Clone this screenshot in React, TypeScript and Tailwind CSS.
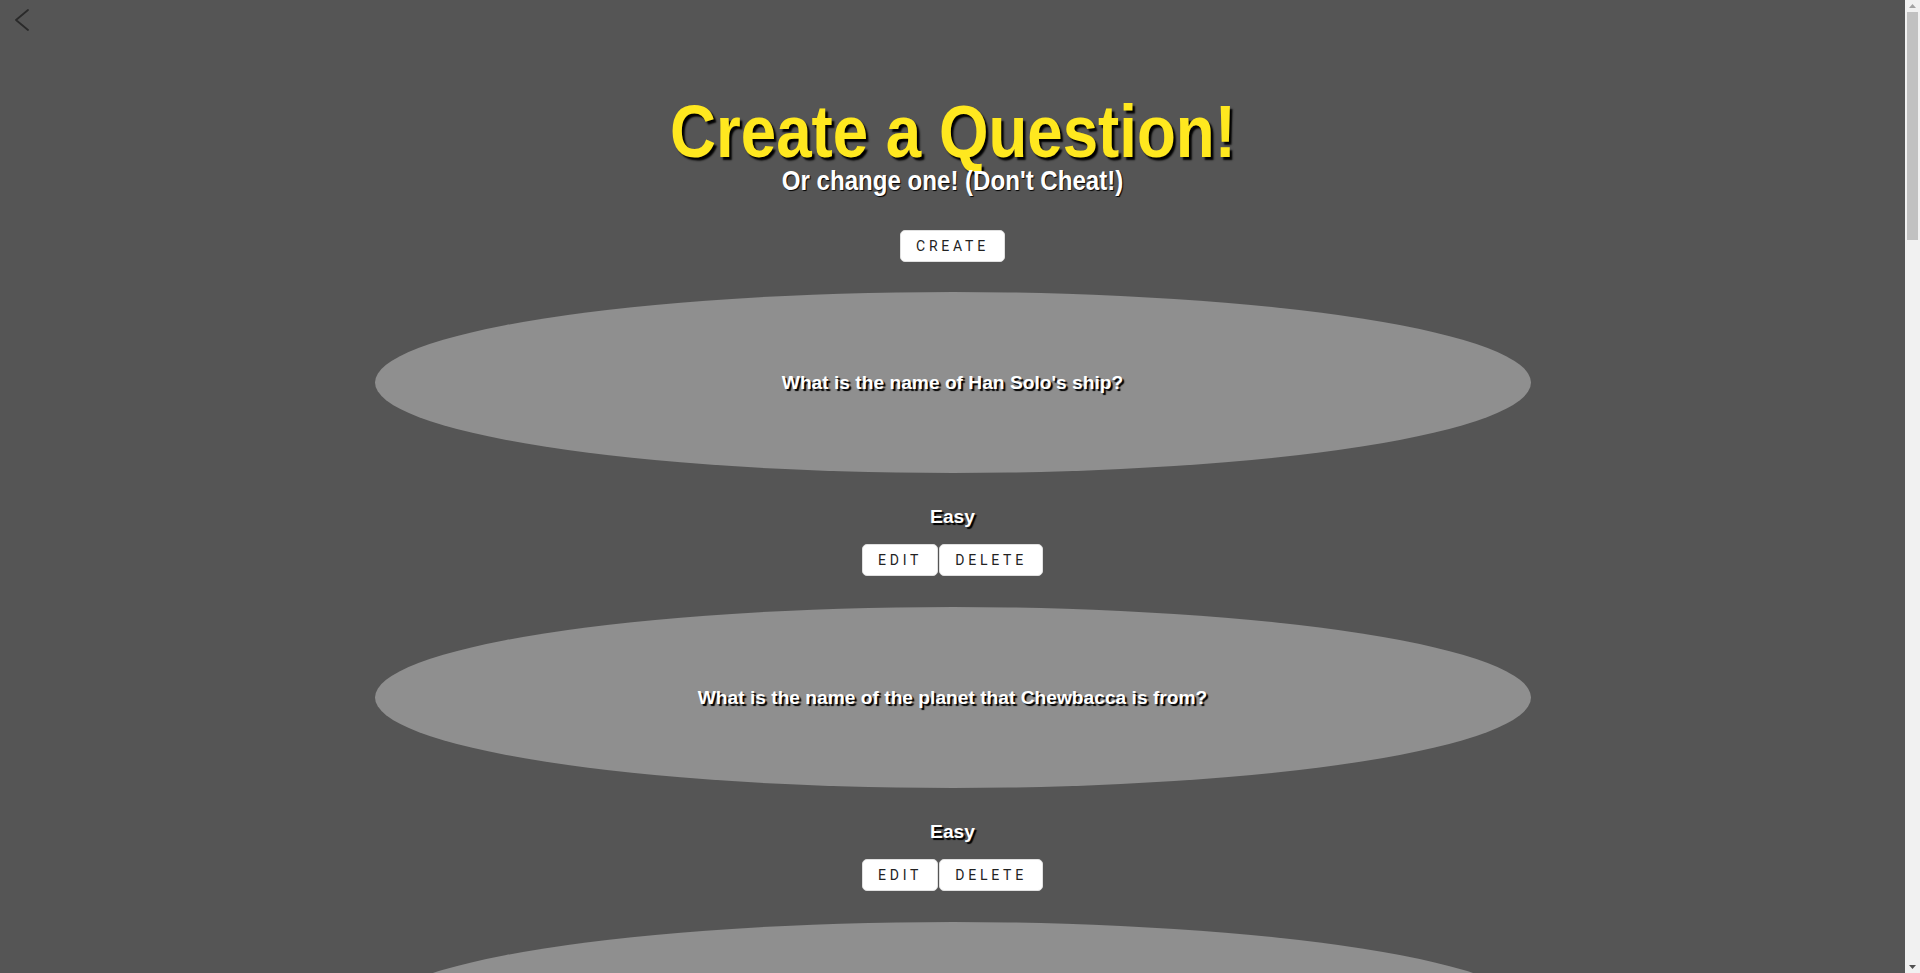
import React from "react";

type Question = { id: number; text: string; difficulty: string };

const questions: Question[] = [
  { id: 1, text: "What is the name of Han Solo's ship?", difficulty: "Easy" },
  { id: 2, text: "What is the name of the planet that Chewbacca is from?", difficulty: "Easy" },
  { id: 3, text: "Who is Luke Skywalker's father?", difficulty: "Easy" },
  { id: 4, text: "What color is Mace Windu's lightsaber?", difficulty: "Medium" },
  { id: 5, text: "Who trained Obi-Wan Kenobi?", difficulty: "Medium" },
  { id: 6, text: "What is the name of Boba Fett's ship?", difficulty: "Medium" },
  { id: 7, text: "Which planet is Padmé Amidala from?", difficulty: "Medium" },
  { id: 8, text: "What species is Jabba?", difficulty: "Easy" },
  { id: 9, text: "Who shot first in the Mos Eisley cantina?", difficulty: "Hard" },
  { id: 10, text: "What is the Sith name of Count Dooku?", difficulty: "Hard" },
  { id: 11, text: "How many parsecs did the Kessel Run take?", difficulty: "Hard" },
  { id: 12, text: "What is the name of the droid that speaks over six million languages?", difficulty: "Easy" },
];

function PillButton({ label }: { label: string }) {
  return (
    <button className="bg-white border border-[#e0e0e0] rounded-[5px] px-[15px] py-[3px] leading-[24px] text-[14px] tracking-[0.27em] text-[#222] font-['Roboto',sans-serif] uppercase">
      {label}
    </button>
  );
}

function QuestionCard({ q }: { q: Question }) {
  return (
    <div className="flex flex-col items-center">
      <div className="w-[1156px] h-[181px] rounded-[50%] bg-[#8f8f8f] flex items-center justify-center">
        <p className="text-white font-bold text-[19.2px] leading-[22px] [text-shadow:2px_2px_1px_#000]">{q.text}</p>
      </div>
      <p className="mt-[33px] text-white font-bold text-[19.2px] leading-[22px] [text-shadow:2px_2px_1px_#000]">{q.difficulty}</p>
      <div className="mt-[16px] mb-[31px] flex gap-[1px]">
        <PillButton label="Edit" />
        <PillButton label="Delete" />
      </div>
    </div>
  );
}

function FakeScrollbar() {
  return (
    <aside className="w-[15px] shrink-0 bg-[#f1f1f1] flex flex-col items-center">
      <svg width="15" height="12" viewBox="0 0 15 12" className="shrink-0">
        <polygon points="4,8 11,8 7.5,4" fill="#a3a3a3" />
      </svg>
      <div className="w-[11px] h-[228px] bg-[#c1c1c1]" />
      <div className="flex-1" />
      <svg width="15" height="12" viewBox="0 0 15 12" className="shrink-0">
        <polygon points="4,4 11,4 7.5,8" fill="#505050" />
      </svg>
    </aside>
  );
}

export default function App() {
  return (
    <div className="h-screen flex bg-[#555555] font-['Liberation_Sans',Arial,sans-serif]">
      <main className="flex-1 relative overflow-y-auto [scrollbar-width:none]">
        <button className="absolute left-[14px] top-[9px] w-[16px] h-[22px]" aria-label="Back">
          <svg width="16" height="22" viewBox="0 0 16 22" fill="none">
            <polyline points="14,1 2,11 14,21" stroke="#2a2a2a" strokeWidth="1.8" strokeLinecap="round" strokeLinejoin="round" />
          </svg>
        </button>

        <header className="flex flex-col items-center pt-[99px]">
          <h1 className="scale-x-[0.86] font-bold text-[74px] leading-[66px] whitespace-nowrap text-[#ffe81f] [text-shadow:3px_3px_2px_#000]">
            Create a Question!
          </h1>
          <h2 className="scale-x-[0.86] font-bold text-[28px] leading-[32px] whitespace-nowrap text-white [text-shadow:1px_1px_1px_#000]">
            Or change one! (Don't Cheat!)
          </h2>
          <div className="mt-[33px] mb-[30px]">
            <PillButton label="Create" />
          </div>
        </header>

        <section>
          {questions.map((q) => (
            <QuestionCard key={q.id} q={q} />
          ))}
        </section>
      </main>
      <FakeScrollbar />
    </div>
  );
}
